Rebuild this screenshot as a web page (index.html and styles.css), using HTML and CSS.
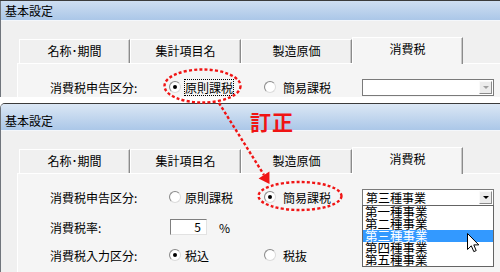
FILE: index.html
```html
<!DOCTYPE html>
<html lang="ja">
<head>
<meta charset="utf-8">
<title>基本設定</title>
<link rel="stylesheet" href="styles.css">
</head>
<body>
<div class="page">
  <div class="crop">
    <section class="win">
      <div class="titlebar">基本設定</div>
      <div class="winbody">
        <div class="tabs">
          <div class="tab">名称･期間</div>
          <div class="tab">集計項目名</div>
          <div class="tab">製造原価</div>
          <div class="tab active">消費税</div>
        </div>
        <div class="panel">
          <div class="row">
            <span class="label">消費税申告区分:</span>
            <span class="radio checked"></span>
            <span class="rlabel"><span class="focus">原則課税</span></span>
            <span class="radio"></span>
            <span class="rlabel">簡易課税</span>
            <span class="combo disabled"><span class="value"></span><span class="btn"><i class="arrow"></i></span></span>
          </div>
        </div>
      </div>
    </section>
  </div>
  <div class="gap"></div>
  <section class="win">
    <div class="titlebar">基本設定</div>
    <div class="winbody">
      <div class="tabs">
        <div class="tab">名称･期間</div>
        <div class="tab">集計項目名</div>
        <div class="tab">製造原価</div>
        <div class="tab active">消費税</div>
      </div>
      <div class="panel">
        <div class="row">
          <span class="label">消費税申告区分:</span>
          <span class="radio"></span>
          <span class="rlabel">原則課税</span>
          <span class="radio checked"></span>
          <span class="rlabel">簡易課税</span>
          <span class="combo">
            <span class="value">第三種事業</span><span class="btn"><i class="arrow"></i></span>
            <span class="list">
              <span class="item">第一種事業</span>
              <span class="item">第二種事業</span>
              <span class="item sel">第三種事業</span>
              <span class="item">第四種事業</span>
              <span class="item">第五種事業</span>
            </span>
          </span>
        </div>
        <div class="row row-rate">
          <span class="label">消費税率:</span>
          <span class="rate"><span class="num">5</span><span class="pct">%</span></span>
        </div>
        <div class="row row-input">
          <span class="label">消費税入力区分:</span>
          <span class="radio checked"></span>
          <span class="rlabel">税込</span>
          <span class="radio"></span>
          <span class="rlabel">税抜</span>
        </div>
      </div>
    </div>
  </section>

  <svg class="marks" width="500" height="272" viewBox="0 0 500 272">
    <g fill="none" stroke="#f01414" stroke-width="2.4" stroke-dasharray="3 2.2">
      <ellipse cx="202.5" cy="86" rx="38" ry="16.5"/>
      <ellipse cx="300" cy="196" rx="41.5" ry="14"/>
      <line x1="219" y1="103" x2="264" y2="175"/>
    </g>
    <polygon points="258.6,178.4 269.4,171.6 269.5,184" fill="#f01414"/>
  </svg>
  <div class="note">訂正</div>
  <svg class="cursor" width="13" height="20" viewBox="0 0 13 20">
    <path d="M0.5 0.5 L0.5 16.5 L4.3 12.8 L6.8 18.6 L9.2 17.6 L6.8 11.9 L11.8 11.9 Z" fill="#fff" stroke="#000" stroke-width="1" stroke-linejoin="miter"/>
  </svg>
</div>
</body>
</html>
```

FILE: styles.css
```css
html, body {
  margin: 0;
  padding: 0;
}

body {
  width: 500px;
  height: 272px;
  overflow: hidden;
  background: #ffffff;
  font-family: "Noto Sans CJK JP", "Noto Sans", sans-serif;
  font-size: 12px;
  color: #000;
}

.page {
  position: relative;
  width: 500px;
  height: 272px;
  overflow: hidden;
}

.crop {
  height: 96px;
  overflow: hidden;
  border-top: 1px solid #3b3b3b;
}

.crop .win {
  margin-top: -8px;
}

.gap {
  height: 6px;
  background: #ffffff;
}

.win {
  width: 540px;
  border-top: 1px solid #3b3b3b;
  border-left: 1px solid #70757c;
  border-top-left-radius: 5px;
  background: #f0f0f0;
  overflow: hidden;
}

.titlebar {
  box-sizing: border-box;
  height: 27px;
  padding: 10px 0 0 4px;
  line-height: 13px;
  background: linear-gradient(#dbe7f5, #abc7e8);
  border-bottom: 1px solid #f4f7fb;
}

.winbody {
  padding: 16px 0 0 16px;
  height: 160px;
}

.tabs {
  display: flex;
  align-items: flex-end;
  height: 26px;
  margin-left: 2px;
}

.tab {
  box-sizing: border-box;
  width: 111px;
  height: 24px;
  border-top: 1px solid #ffffff;
  border-left: 1px solid #ffffff;
  border-right: 1px solid #8b8b8b;
  box-shadow: inset -1px 0 #c8c8c8;
  background: #f0f0f0;
  text-align: center;
  line-height: 22px;
  white-space: nowrap;
}

.tab.active {
  position: relative;
  z-index: 1;
  height: 27px;
  margin-bottom: -1px;
  background: #f5f5f5;
  line-height: 22px;
}

.panel {
  border-top: 1px solid #ffffff;
  border-left: 1px solid #ffffff;
  background: #f5f5f5;
  padding: 13px 0 0 32px;
  height: 120px;
}

.row {
  display: grid;
  grid-template-columns: 119px 16px 79px 19px 79px 132px;
  align-items: center;
  height: 20px;
  white-space: nowrap;
}

.row-rate {
  margin-top: 10px;
}

.row-input {
  margin-top: 8px;
}

.radio {
  position: relative;
  box-sizing: border-box;
  width: 12px;
  height: 12px;
  border-radius: 50%;
  border: 1px solid;
  border-color: #8a8a8a #dcdcdc #dcdcdc #8a8a8a;
  background: radial-gradient(circle at 60% 60%, #ffffff 55%, #e9e9e9 100%);
}

.radio.checked::after {
  content: "";
  position: absolute;
  left: 3px;
  top: 3px;
  width: 4px;
  height: 4px;
  border-radius: 50%;
  background: #000;
}

.rlabel {
  line-height: 15px;
}

.focus {
  display: inline-block;
  margin-left: -1px;
  padding: 0 0 0 0;
  border: 1px dotted #000;
  line-height: 15px;
}

.combo {
  position: relative;
  box-sizing: border-box;
  display: flex;
  width: 132px;
  height: 17px;
  border: 1px solid #7a7a7a;
  background: #ffffff;
}

.combo .value {
  flex: 1;
  padding-left: 3px;
  line-height: 15px;
}

.btn {
  box-sizing: border-box;
  width: 13px;
  height: 13px;
  margin: 1px;
  background: #ececec;
  border: 1px solid;
  border-color: #fafafa #8a8a8a #8a8a8a #fafafa;
  display: flex;
  align-items: center;
  justify-content: center;
}

.arrow {
  width: 0;
  height: 0;
  border-left: 3px solid transparent;
  border-right: 3px solid transparent;
  border-top: 3px solid #000;
  margin-top: 1px;
}

.combo.disabled .arrow {
  border-top-color: #a0a0a0;
}

.list {
  position: absolute;
  left: -1px;
  top: 15px;
  box-sizing: border-box;
  width: 132px;
  border: 1px solid #646464;
  background: #ffffff;
  display: flex;
  flex-direction: column;
  z-index: 2;
}

.item {
  height: 12.2px;
  line-height: 12px;
  padding-left: 2px;
  font-size: 12.5px;
  white-space: nowrap;
  overflow: visible;
}

.item.sel {
  background: #3399ff;
  color: #ffffff;
}

.rate {
  grid-column: 2 / span 4;
  display: flex;
  align-items: center;
}

.num {
  box-sizing: border-box;
  width: 37px;
  height: 16px;
  margin-left: 1px;
  border: 1px solid;
  border-color: #7f7f7f #e2e2e2 #e2e2e2 #7f7f7f;
  background: #ffffff;
  text-align: right;
  padding-right: 5px;
  line-height: 14px;
}

.pct {
  margin-left: 12px;
}

.marks {
  position: absolute;
  left: 0;
  top: 0;
  z-index: 5;
}

.note {
  position: absolute;
  left: 250px;
  top: 109px;
  z-index: 6;
  color: #f01414;
  font-size: 21px;
  font-weight: 700;
  line-height: 24px;
  letter-spacing: 1px;
}

.cursor {
  position: absolute;
  left: 467px;
  top: 233px;
  z-index: 7;
}
```
